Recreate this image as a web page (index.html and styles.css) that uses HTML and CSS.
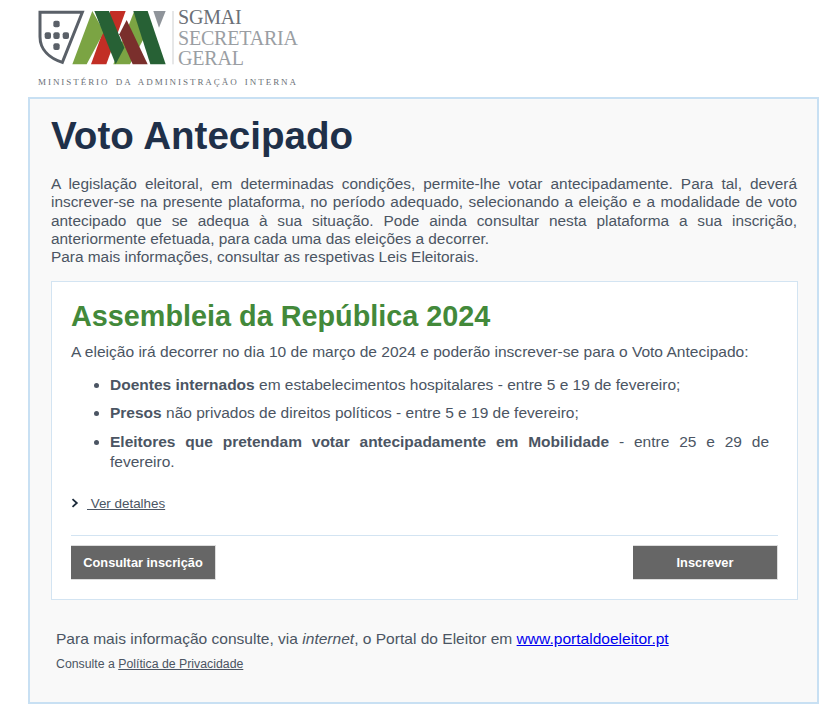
FILE: index.html
```html
<!DOCTYPE html>
<html lang="pt">
<head>
<meta charset="utf-8">
<title>Voto Antecipado</title>
<link rel="stylesheet" href="styles.css">
</head>
<body>
<header class="brand">
  <div class="brand-top">
    <svg class="brand-mark" width="140" height="65" viewBox="0 0 420 195">
      <path d="M15 22H142L82 172C45 160 15 135 15 95Z" fill="none" stroke="#5a6068" stroke-width="9"/>
      <g fill="#5a6068">
        <rect x="55" y="47" width="19" height="20" rx="6"/>
        <rect x="55" y="82" width="19" height="20" rx="6"/>
        <rect x="55" y="115" width="19" height="20" rx="6"/>
        <rect x="29" y="82" width="19" height="20" rx="6"/>
        <rect x="83" y="82" width="19" height="20" rx="6"/>
      </g>
      <polygon points="226,18 272,18 214,178 168,178" fill="#c22e25"/>
      <polygon points="112,178 172,18 207,80 155,178" fill="#7ba443"/>
      <polygon points="235,178 298,18 332,90 285,178" fill="#7ba443"/>
      <polygon points="178,18 222,18 268,128 242,178" fill="#276135"/>
      <polygon points="253,88 275,45 338,178 293,178" fill="#7a2f2c"/>
      <polygon points="295,18 338,18 392,178 346,178" fill="#276135"/>
      <polygon points="355,18 392,18 372,68" fill="#8f949a"/>
      <rect x="413" y="18" width="2" height="160" fill="#b5b8bb"/>
    </svg>
    <div class="brand-name">
      <span class="brand-strong">SGMAI</span>
      <span>SECRETARIA</span>
      <span>GERAL</span>
    </div>
  </div>
  <div class="brand-ministry">MINISTÉRIO DA ADMINISTRAÇÃO INTERNA</div>
</header>

<main class="panel">
  <h1 class="title">Voto Antecipado</h1>
  <p class="intro">A legislação eleitoral, em determinadas condições, permite-lhe votar antecipadamente. Para tal, deverá inscrever-se na presente plataforma, no período adequado, selecionando a eleição e a modalidade de voto antecipado que se adequa à sua situação. Pode ainda consultar nesta plataforma a sua inscrição, anteriormente efetuada, para cada uma das eleições a decorrer.<br>Para mais informações, consultar as respetivas Leis Eleitorais.</p>

  <section class="card">
    <h2 class="card-title">Assembleia da República 2024</h2>
    <p class="card-lead">A eleição irá decorrer no dia 10 de março de 2024 e poderão inscrever-se para o Voto Antecipado:</p>
    <ul class="list">
      <li><strong>Doentes internados</strong> em estabelecimentos hospitalares - entre 5 e 19 de fevereiro;</li>
      <li><strong>Presos</strong> não privados de direitos políticos - entre 5 e 19 de fevereiro;</li>
      <li><strong>Eleitores que pretendam votar antecipadamente em Mobilidade</strong> - entre 25 e 29 de fevereiro.</li>
    </ul>
    <div class="details">
      <svg class="chevron" width="8" height="10" viewBox="0 0 8 10"><path d="M1.5 1.2L5.8 5L1.5 8.8" fill="none" stroke="#1b2a3a" stroke-width="1.8"/></svg>
      <a class="details-link" href="#">&nbsp;Ver detalhes</a>
    </div>
    <div class="actions">
      <a class="btn" href="#">Consultar inscrição</a>
      <a class="btn" href="#">Inscrever</a>
    </div>
  </section>

  <p class="more">Para mais informação consulte, via <em>internet</em>, o Portal do Eleitor em <a class="portal" href="#">www.portaldoeleitor.pt</a></p>
  <p class="privacy">Consulte a <a class="privacy-link" href="#">Política de Privacidade</a></p>
</main>
</body>
</html>
```
FILE: styles.css
```css
* { box-sizing: border-box; }
html, body { margin: 0; padding: 0; background: #fff; }
body {
  width: 836px;
  height: 711px;
  overflow: hidden;
  font-family: "Liberation Sans", Arial, sans-serif;
  color: #4b5563;
  font-size: 15.55px;
}
.brand { height: 97px; padding: 5px 0 0 35px; }
.brand-top { display: flex; align-items: flex-start; gap: 3px; height: 65px; }
.brand-mark { display: block; }
.brand-name {
  display: flex;
  flex-direction: column;
  margin-top: 2px;
  font-family: "Liberation Serif", serif;
  font-size: 20px;
  line-height: 20.5px;
  color: #9a9ea3;
  letter-spacing: -0.2px;
}
.brand-strong { color: #6b7077; }
.brand-ministry {
  margin: 6px 0 0 3px;
  font-family: "Liberation Serif", serif;
  font-size: 9px;
  line-height: 12px;
  letter-spacing: 1.95px;
  word-spacing: 2px;
  color: #6b7077;
  white-space: nowrap;
}
.panel {
  width: 791px;
  height: 607px;
  margin-left: 28px;
  padding: 15px 21px 0 21px;
  background: #f9f9f9;
  border: 2px solid #c8e0f3;
}
.title {
  margin: 0;
  font-size: 38.6px;
  line-height: 44px;
  font-weight: 700;
  color: #1f3049;
}
.intro {
  margin: 17px 0 0;
  font-size: 15.4px;
  line-height: 18.3px;
  text-align: justify;
  width: 746px;
}
.card {
  width: 747px;
  height: 319px;
  margin-top: 14.5px;
  padding: 17px 19px 0;
  background: #fff;
  border: 1px solid #d3e4f2;
}
.card-title {
  margin: 0;
  font-size: 28.8px;
  line-height: 34px;
  font-weight: 700;
  color: #43893a;
}
.card-lead { margin: 10px 0 0; line-height: 18px; }
.list { margin: 14px 9px 0 0; padding: 0 0 0 39px; font-size: 15.5px; text-align: justify; }
.list li { line-height: 20px; margin-bottom: 8.3px; }
.list strong { font-weight: 700; }
.details { display: flex; align-items: center; gap: 8px; margin-top: 23px; height: 18px; }
.chevron { display: block; margin-top: -2px; }
.details-link { color: #4b5563; font-size: 13.4px; text-decoration: underline; }
.actions {
  display: flex;
  justify-content: space-between;
  margin-top: 22px;
  padding-top: 9px;
  border-top: 1px solid #d3e4f2;
}
.btn {
  display: block;
  width: 145px;
  height: 35px;
  background: #666;
  border: 1px solid #ddd;
  border-left-width: 0;
  color: #fff;
  font-size: 12.8px;
  font-weight: 700;
  line-height: 33px;
  text-decoration: none;
  text-align: center;
}
.more { margin: 30.5px 0 0 5px; line-height: 18px; }
.portal { color: #0000ee; text-decoration: underline; }
.privacy { margin: 8px 0 0 5px; font-size: 12.3px; line-height: 16px; }
.privacy-link { color: #4b5563; text-decoration: underline; }
```
